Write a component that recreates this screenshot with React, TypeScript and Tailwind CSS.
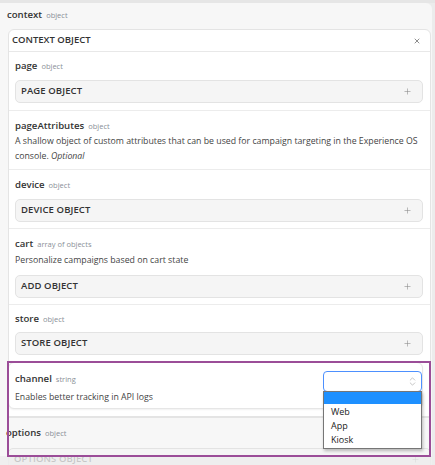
import { Plus, X, ChevronsUpDown } from "lucide-react";

function Title({ name, type }: { name: string; type: string }) {
  return (
    <div className="flex items-baseline gap-[4px] leading-[14px]">
      <span className="text-[9.6px] font-semibold text-[#333]">{name}</span>
      <span className="text-[7.5px] text-[#8a8f98]">{type}</span>
    </div>
  );
}

function AddButton({ label }: { label: string }) {
  return (
    <div className="flex h-[23px] items-center justify-between rounded-[5px] border border-[#e3e3e3] bg-[#f5f5f5] pl-[5px] pr-[10px]">
      <span className="text-[9.5px] font-semibold tracking-[0.1px] text-[#333]">{label}</span>
      <Plus className="h-[9px] w-[9px] text-[#888]" strokeWidth={1.5} />
    </div>
  );
}

export default function App() {
  return (
    <div className="relative h-[465px] w-[435px] overflow-hidden bg-[#ececec] font-['Open_Sans',sans-serif]">
      <div className="h-[3px] bg-[#e6e6e6]" />
      <div className="w-[432px] rounded-tr-[6px] bg-[#f7f7f7] pt-[5px]">
        <div className="pl-[7px]">
          <Title name="context" type="object" />
        </div>

        <div className="ml-[8px] mt-[7px] w-[423px] rounded-t-[6px] border border-[#e4e4e4] bg-white">
          <div className="flex h-[22px] items-center justify-between border-b border-[#e8e8e8] pl-[3px] pr-[9px]">
            <span className="text-[9.5px] font-semibold text-[#333]">CONTEXT OBJECT</span>
            <X className="h-[8px] w-[8px] text-[#555]" strokeWidth={2} />
          </div>

          <div className="border-b border-[#ececec] pb-[7px] pl-[6px] pr-[7px] pt-[7px]">
            <Title name="page" type="object" />
            <div className="mt-[7px]">
              <AddButton label="PAGE OBJECT" />
            </div>
          </div>

          <div className="border-b border-[#ececec] pb-[5px] pl-[6px] pr-[7px] pt-[8px]">
            <Title name="pageAttributes" type="object" />
            <p className="mt-[1px] text-[8.75px] leading-[15px] text-[#444]">
              A shallow object of custom attributes that can be used for campaign targeting in the Experience OS
              console. <em>Optional</em>
            </p>
          </div>

          <div className="border-b border-[#ececec] pb-[6px] pl-[6px] pr-[7px] pt-[8px]">
            <Title name="device" type="object" />
            <div className="mt-[7px]">
              <AddButton label="DEVICE OBJECT" />
            </div>
          </div>

          <div className="border-b border-[#ececec] pb-[6px] pl-[6px] pr-[7px] pt-[8px]">
            <Title name="cart" type="array of objects" />
            <p className="mt-[2px] text-[8.75px] leading-[15px] text-[#444]">Personalize campaigns based on cart state</p>
            <div className="mt-[7px]">
              <AddButton label="ADD OBJECT" />
            </div>
          </div>

          <div className="border-b border-[#e4e4e4] pb-[7px] pl-[6px] pr-[7px] pt-[7px]">
            <Title name="store" type="object" />
            <div className="mt-[6px]">
              <AddButton label="STORE OBJECT" />
            </div>
            <div className="relative -ml-[7px] mt-[7px] rounded-[6px] border border-[#e6e6e6] bg-white pb-[3px] pl-[6px] pt-[8px] shadow-[0_1px_2px_rgba(0,0,0,0.06)]">
              <div className="flex items-start justify-between">
                <div className="pt-[1px]">
                  <Title name="channel" type="string" />
                  <p className="mt-[4px] text-[8.75px] leading-[15px] text-[#444]">Enables better tracking in API logs</p>
                </div>
                <div className="flex h-[21px] w-[99px] items-center justify-end rounded-[4px] border-[1.5px] border-[#4d90fe] bg-white pr-[3px]">
                  <ChevronsUpDown className="h-[11px] w-[11px] text-[#aaa]" strokeWidth={1.5} />
                </div>
              </div>
              <div className="absolute right-0 top-[28px] z-10 w-[99px] border border-[#767676] bg-white text-[9px] leading-[14px] text-[#222] shadow-[1px_2px_3px_rgba(0,0,0,0.25)]">
                <div className="h-[12px] bg-[#1e90ff]" />
                <div className="px-[7px] pt-[1px]">Web</div>
                <div className="px-[7px]">App</div>
                <div className="px-[7px] pb-[1px]">Kiosk</div>
              </div>
            </div>
          </div>
        </div>

        <div className="pl-[6px] pt-[8px]">
          <Title name="options" type="object" />
          <div className="ml-[2px] mt-[8px] w-[423px]">
            <AddButton label="OPTIONS OBJECT" />
          </div>
        </div>
      </div>

      <div className="absolute bottom-0 left-0 h-[9px] w-full bg-[#ececec]/80" />
      <div className="pointer-events-none absolute left-[7px] top-[361px] h-[96px] w-[424px] border-2 border-[#9b4d98]" />
    </div>
  );
}
